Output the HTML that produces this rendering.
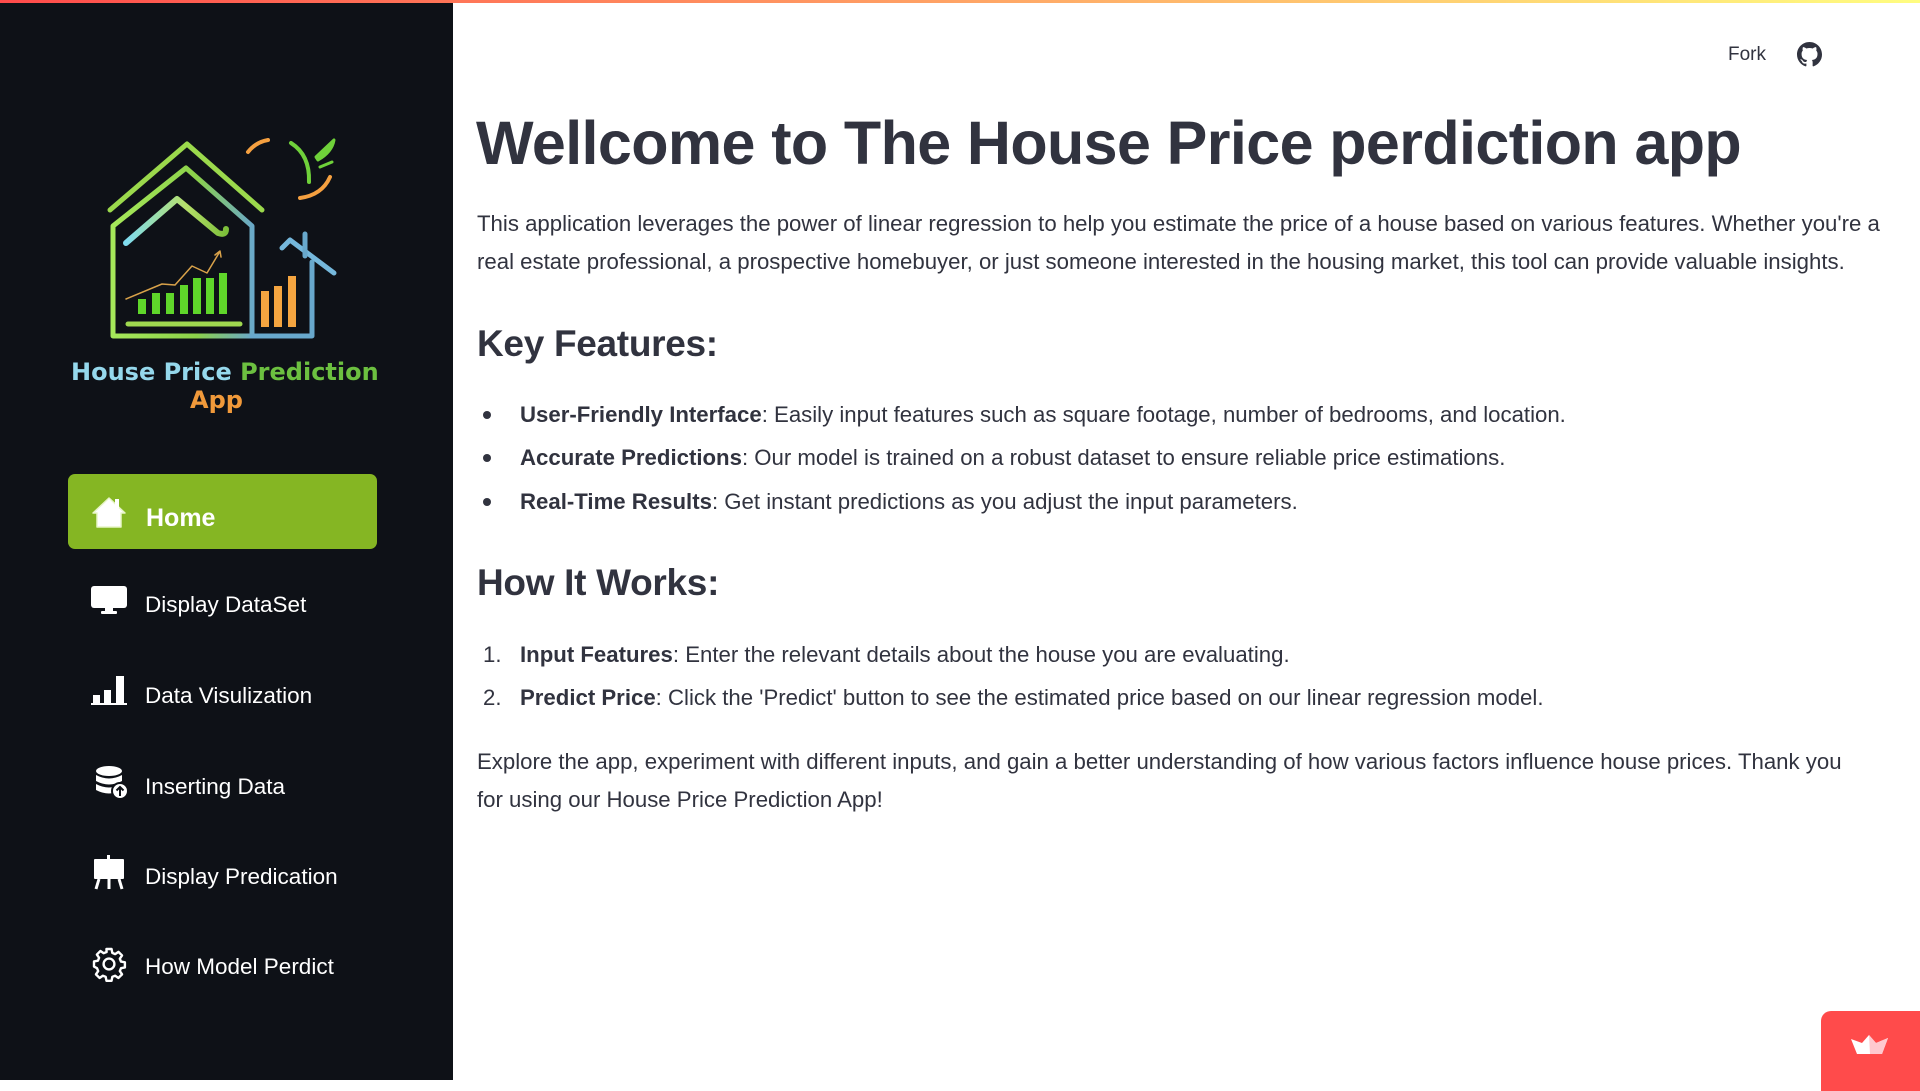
<!DOCTYPE html>
<html><head><meta charset="utf-8"><style>
*{margin:0;padding:0;box-sizing:border-box}
body{width:1920px;height:1080px;overflow:hidden;background:#fff;font-family:"Liberation Sans",Arial,sans-serif;position:relative;color:#31333f}
.bar{position:absolute;left:0;top:0;width:1920px;height:3px;background:linear-gradient(90deg,#ff4b4b,#fffd80);z-index:5}
.side{position:absolute;left:0;top:0;width:453px;height:1080px;background:#0e1117}
.nav{position:absolute;left:145px;color:#fff;font-size:22.5px;line-height:30px;white-space:nowrap}
.ic{position:absolute;left:90px}
.home{position:absolute;left:68px;top:474px;width:309px;height:75px;background:#85b623;border-radius:7px}
.t{position:absolute;white-space:nowrap;font-size:22.2px;line-height:38px}
h1{position:absolute;left:476px;top:104px;font-size:61px;line-height:78px;font-weight:bold;white-space:nowrap;letter-spacing:-0.6px;color:#31333f}
h2{position:absolute;left:477px;font-size:37px;line-height:50px;font-weight:bold;white-space:nowrap;letter-spacing:-0.3px}
.dot{position:absolute;left:483px;width:8px;height:8px;border-radius:50%;background:#31333f}
</style></head><body>
<div class="bar"></div>
<div class="side">
<svg width="453" height="430" style="position:absolute;left:0;top:0" fill="none" stroke-linecap="round" stroke-linejoin="round">
<defs>
<linearGradient id="g1" x1="0" x2="1" y1="0" y2="0"><stop offset="0" stop-color="#a6e85a"/><stop offset=".6" stop-color="#8cd14a"/><stop offset="1" stop-color="#6aa9c8"/></linearGradient>
<linearGradient id="g2" x1="0" x2="1"><stop offset="0" stop-color="#7fdcf0"/><stop offset=".6" stop-color="#b6e06a"/><stop offset="1" stop-color="#7cbf3a"/></linearGradient>
</defs>
<path d="M110 210 L187 144 L262 210" stroke="#9bd94c" stroke-width="5"/>
<path d="M113 336 L113 226 L186 168 L252 226 L252 336 Z" stroke="url(#g1)" stroke-width="5"/>
<path d="M126 243 L177 199 L218 233 Q226 236 226 229" stroke="url(#g2)" stroke-width="6"/>
<path d="M128 324 L240 324" stroke="#9fd84f" stroke-width="5"/>
<g fill="#5fd62a" stroke="none">
<rect x="138" y="299" width="8" height="15"/><rect x="152" y="293" width="8" height="21"/><rect x="166" y="293" width="8" height="21"/><rect x="180" y="285" width="8" height="29"/><rect x="193" y="278" width="8" height="36"/><rect x="206" y="278" width="8" height="36"/><rect x="219" y="273" width="8" height="41"/>
</g>
<path d="M126 299 L162 284 L175 285 L192 266 L207 273 L219 253" stroke="#d9a24a" stroke-width="1.5"/>
<path d="M215 255 L220 251 L221 257" stroke="#d9a24a" stroke-width="1.5"/>
<g fill="#f5a540" stroke="none"><rect x="261" y="291" width="8" height="36"/><rect x="274" y="286" width="8" height="41"/><rect x="288" y="276" width="8" height="51"/></g>
<path d="M252 336 L312 336 L312 262" stroke="#68a8cc" stroke-width="5"/>
<path d="M282 248 L290 240 L334 273" stroke="#75b8dc" stroke-width="5"/>
<path d="M305 234 L305 256" stroke="#68a8cc" stroke-width="5"/>
<path d="M248 152 Q256 142 268 140" stroke="#f5a040" stroke-width="4"/>
<path d="M291 143 Q310 155 309 182" stroke="#6fd13a" stroke-width="4"/>
<path d="M330 177 Q322 195 300 198" stroke="#f5a040" stroke-width="4"/>
<path d="M316 157 L334 140 Q332 152 318 160 Z M320 167 L332 162" stroke="#6fd13a" stroke-width="3" fill="#6fd13a"/>
<text x="71" y="380" font-family="DejaVu Sans,sans-serif" font-size="24" font-weight="bold" stroke="none"><tspan fill="#95d8ec">House Price </tspan><tspan fill="#6cc040">Prediction</tspan></text>
<text x="190" y="408" font-family="DejaVu Sans,sans-serif" font-size="24" font-weight="bold" fill="#f0993a" stroke="none">App</text>
</svg>
<div class="home"></div>
<svg class="ic" style="left:91px;top:496px" width="36" height="32" viewBox="0 0 36 32"><path d="M18 2 L34 17 L30 17 L30 31 L6 31 L6 17 L2 17 Z" fill="#fff" stroke="#e8f5c8" stroke-width="1.5" stroke-linejoin="round"/><rect x="24" y="3" width="4" height="9" fill="#fff"/></svg>
<div class="nav" style="left:146px;top:503px;font-weight:bold;font-size:25px">Home</div>

<svg class="ic" style="left:91px;top:586px" width="36" height="30" viewBox="0 0 36 30"><rect x="0" y="0" width="36" height="22" rx="3" fill="#fff"/><rect x="14" y="21" width="8" height="5" fill="#fff"/><rect x="10" y="25" width="16" height="3" rx="1" fill="#fff"/></svg>
<div class="nav" style="top:590px">Display DataSet</div>

<svg class="ic" style="left:91px;top:675px" width="36" height="31" viewBox="0 0 36 31"><rect x="2" y="20" width="7" height="9" fill="#fff"/><rect x="13" y="15" width="7" height="14" fill="#fff"/><rect x="25" y="1" width="8" height="28" fill="#fff"/><rect x="0" y="28" width="36" height="2" fill="#fff"/></svg>
<div class="nav" style="top:681px">Data Visulization</div>

<svg class="ic" style="left:95px;top:766px" width="34" height="34" viewBox="0 0 34 34"><ellipse cx="14" cy="5" rx="13" ry="5" fill="#fff"/><path d="M1 9 Q14 16 27 9 V15 Q14 22 1 15 Z M1 18 Q14 25 27 18 V24 Q14 31 1 24 Z" fill="#fff"/><circle cx="25" cy="25" r="8" fill="#fff" stroke="#0e1117" stroke-width="2"/><path d="M25 30 V21 M21.5 24.5 L25 21 L28.5 24.5" stroke="#0e1117" stroke-width="2" fill="none"/></svg>
<div class="nav" style="top:772px">Inserting Data</div>

<svg class="ic" style="left:93px;top:855px" width="32" height="35" viewBox="0 0 32 35"><rect x="14" y="0" width="3" height="5" fill="#fff"/><rect x="1" y="4" width="30" height="20" rx="1" fill="#fff"/><path d="M6 24 L3 34 M16 24 L16 34 M26 24 L29 34" stroke="#fff" stroke-width="3"/></svg>
<div class="nav" style="top:862px">Display Predication</div>

<svg class="ic" style="left:91px;top:946px" width="36" height="36" viewBox="0 0 24 24"><path fill="none" stroke="#fff" stroke-width="1.6" stroke-linejoin="round" d="M10.3 2h3.4l.5 2.6 1.9.8 2.2-1.5 2.4 2.4-1.5 2.2.8 1.9 2.6.5v3.4l-2.6.5-.8 1.9 1.5 2.2-2.4 2.4-2.2-1.5-1.9.8-.5 2.6h-3.4l-.5-2.6-1.9-.8-2.2 1.5-2.4-2.4 1.5-2.2-.8-1.9L2 13.7v-3.4l2.6-.5.8-1.9-1.5-2.2 2.4-2.4 2.2 1.5 1.9-.8z"/><circle cx="12" cy="12" r="3.6" fill="none" stroke="#fff" stroke-width="1.6"/></svg>
<div class="nav" style="top:952px">How Model Perdict</div>
</div>

<div class="t" style="left:1728px;top:36px;font-size:19px;color:#31333f">Fork</div>
<svg style="position:absolute;left:1797px;top:42px" width="25" height="25" viewBox="0 0 16 16"><path fill="#31333f" d="M8 0C3.58 0 0 3.580 0 8c0 3.54 2.29 6.53 5.47 7.59.4.07.55-.17.55-.38 0-.19-.01-.82-.01-1.49-2.010.37-2.53-.49-2.69-.94-.09-.23-.48-.94-.82-1.130-.28-.15-.68-.52-.01-.53.63-.01 1.08.58 1.23.82.72 1.21 1.87.87 2.33.66.07-.52.28-.87.51-1.07-1.78-.2-3.64-.89-3.64-3.95 0-.87.31-1.59.82-2.15-.08-.2-.36-1.02.08-2.12 0 0 .67-.21 2.2.82.64-.18 1.32-.27 2-.27.68 0 1.36.09 2 .27 1.53-1.04 2.2-.82 2.2-.82.44 1.1.16 1.92.08 2.12.51.56.82 1.27.82 2.15 0 3.07-1.87 3.75-3.65 3.95.29.25.54.73.54 1.48 0 1.07-.01 1.93-.01 2.2 0 .21.15.46.55.38A8.013 8.013 0 0016 8c0-4.42-3.58-8-8-8z"/></svg>

<h1>Wellcome to The House Price perdiction app</h1>
<div class="t" style="left:477px;top:205px">This application leverages the power of linear regression to help you estimate the price of a house based on various features. Whether you're a</div>
<div class="t" style="left:477px;top:243px">real estate professional, a prospective homebuyer, or just someone interested in the housing market, this tool can provide valuable insights.</div>
<h2 style="top:319px">Key Features:</h2>
<div class="dot" style="top:411px"></div><div class="t" style="left:520px;top:396px"><b>User-Friendly Interface</b>: Easily input features such as square footage, number of bedrooms, and location.</div>
<div class="dot" style="top:454px"></div><div class="t" style="left:520px;top:439px"><b>Accurate Predictions</b>: Our model is trained on a robust dataset to ensure reliable price estimations.</div>
<div class="dot" style="top:498px"></div><div class="t" style="left:520px;top:483px"><b>Real-Time Results</b>: Get instant predictions as you adjust the input parameters.</div>
<h2 style="top:558px">How It Works:</h2>
<div class="t" style="left:483px;top:636px">1.</div><div class="t" style="left:520px;top:636px"><b>Input Features</b>: Enter the relevant details about the house you are evaluating.</div>
<div class="t" style="left:483px;top:679px">2.</div><div class="t" style="left:520px;top:679px"><b>Predict Price</b>: Click the 'Predict' button to see the estimated price based on our linear regression model.</div>
<div class="t" style="left:477px;top:743px">Explore the app, experiment with different inputs, and gain a better understanding of how various factors influence house prices. Thank you</div>
<div class="t" style="left:477px;top:781px">for using our House Price Prediction App!</div>

<div style="position:absolute;left:1821px;top:1011px;width:110px;height:80px;background:#ff4b4b;border-radius:10px 0 0 0"></div>
<svg style="position:absolute;left:1850px;top:1034px" width="40" height="24" viewBox="0 0 40 24"><path d="M1 5 L12 9 L19 1 L26 9 L38 4 L32 20 L7 20 Z" fill="#fff"/><path d="M19 1 L26 9 L38 4 L32 20 L20 20 Z" fill="#ffc9cf"/></svg>
</body></html>
